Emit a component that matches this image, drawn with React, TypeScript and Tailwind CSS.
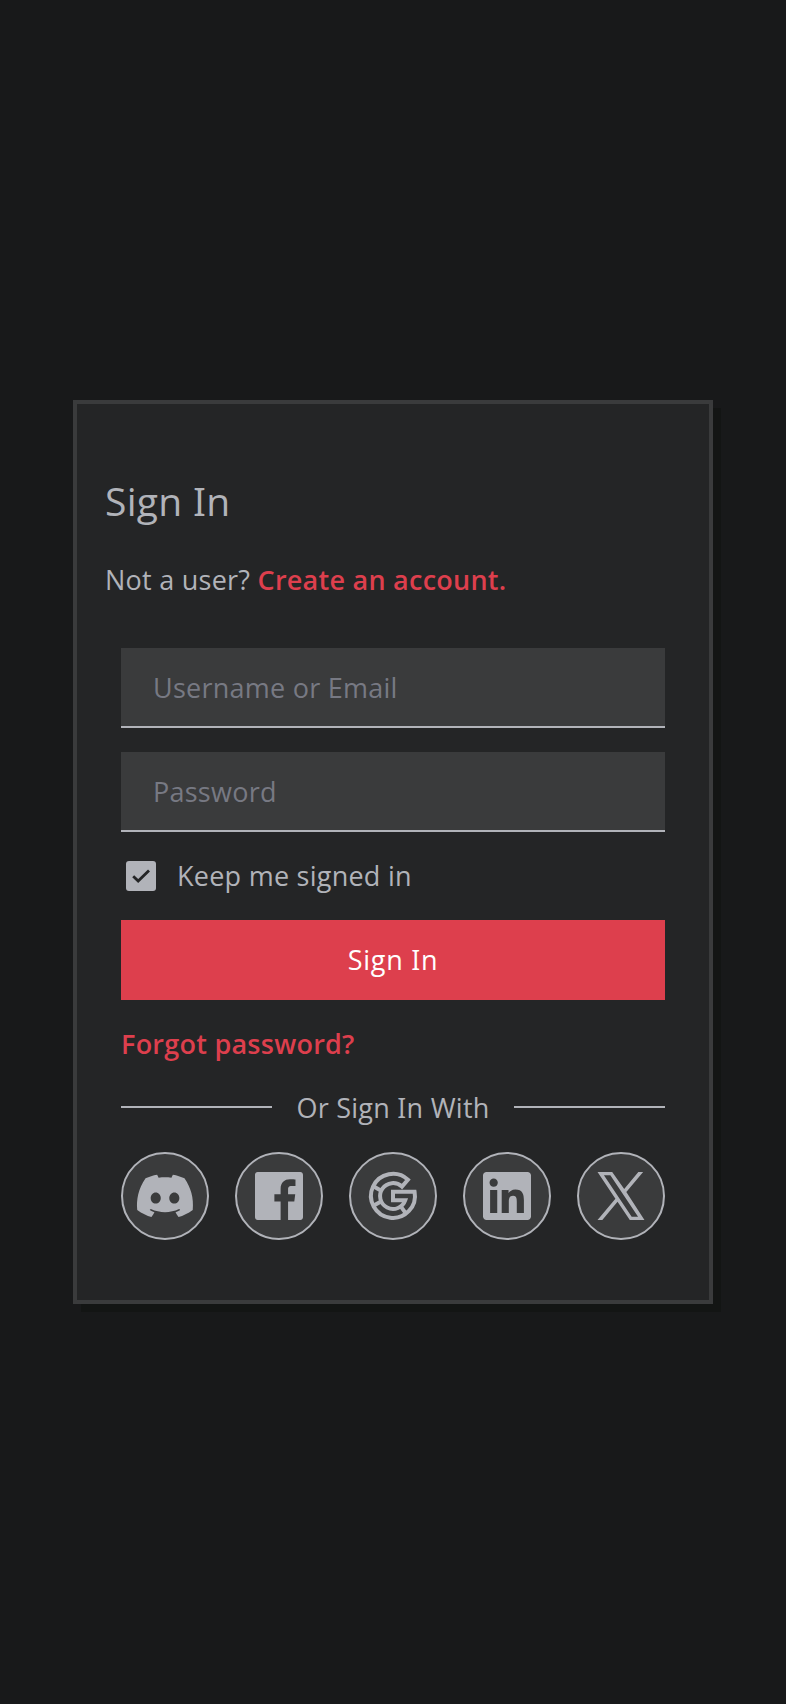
import { useState } from "react";
import { RiDiscordFill, RiFacebookBoxFill, RiLinkedinBoxFill } from "react-icons/ri";

function GoogleIcon({ className }: { className?: string }) {
  return (
    <svg viewBox="0 0 24 24" className={className} fill="none" stroke="currentColor" strokeWidth="1.5">
      <path d="M15.35 8.5 17.6 5.9A8.25 8.25 0 1 0 20.1 10.45H12V13.55H16.6A4.85 4.85 0 1 1 15.35 8.5Z" />
      <path d="M4.8 8.4 7.4 9.9M4.8 15.6 7.5 14.1M14.9 15.9 16.9 18.6" />
    </svg>
  );
}

function XIcon({ className }: { className?: string }) {
  return (
    <svg viewBox="0 0 24 24" className={className} fill="currentColor">
      <path
        fillRule="evenodd"
        d="M3.2 3H8.7L13.2 9.4 18.5 3H20.3L14 10.5 20.8 21H15.3L10.7 14.2 5 21H3.2L9.9 13ZM5.6 4.25 16 19.75H18.4L8 4.25Z"
      />
    </svg>
  );
}

const providers = [
  { name: "Discord", Icon: RiDiscordFill },
  { name: "Facebook", Icon: RiFacebookBoxFill },
  { name: "Google", Icon: GoogleIcon },
  { name: "LinkedIn", Icon: RiLinkedinBoxFill },
  { name: "X", Icon: XIcon },
];

// Capital I with serifs
function SignIn() {
  return (
    <>
      Sign <span className="[font-feature-settings:'salt','ss01']">I</span>n
    </>
  );
}

const inputClass =
  "block h-20 w-full border-b-2 border-[#b1b3b9] bg-[#3a3b3c] px-8 text-[27px] tracking-[0.25px] outline-none placeholder:text-[#777983]";

export default function App() {
  const [keep, setKeep] = useState(true);

  return (
    <div className="flex h-[1704px] items-center justify-center bg-[#18191a] font-['Open_Sans',sans-serif] text-[27px] leading-9 tracking-[0.25px] text-[#b1b3b9]">
      <div className="h-[904px] w-[640px] border-4 border-[#3a3b3c] bg-[#242526] px-7 pt-[73px] shadow-[8px_8px_0_#131514]">
        <h1 className="text-[39px] leading-[48px] tracking-[0.3px]">
          <SignIn />
        </h1>
        <p className="mt-[37px] whitespace-nowrap">
          Not a user?{" "}
          <a href="#" className="font-semibold text-[#dd3f4d]">
            Create an account.
          </a>
        </p>
        <form className="mt-[50px] px-4" onSubmit={(e) => e.preventDefault()}>
          <input type="text" placeholder="Username or Email" className={inputClass} />
          <input type="password" placeholder="Password" className={`${inputClass} mt-6`} />
          <label className="mt-[26px] flex h-9 items-center pl-[5px]">
            <input type="checkbox" className="sr-only" checked={keep} onChange={(e) => setKeep(e.target.checked)} />
            <span className="flex size-[30px] items-center justify-center rounded-[3px] bg-[#b1b3b9]">
              {keep && (
                <svg viewBox="0 0 30 30" className="size-[30px]" fill="none" stroke="#242526" strokeWidth="2.8">
                  <path d="M7.2 15.2 12.2 20 23 9.6" />
                </svg>
              )}
            </span>
            <span className="ml-[21px]">Keep me signed in</span>
          </label>
          <button type="submit" className="mt-[26px] block h-20 w-full bg-[#dd3f4d] tracking-[0.7px] text-white">
            <SignIn />
          </button>
          <a href="#" className="mt-[26px] block font-semibold text-[#dd3f4d]">
            Forgot password?
          </a>
          <div className="mt-7 flex h-9 items-center">
            <span className="mb-0.5 h-0.5 w-[151px] bg-[#b1b3b9]" />
            <span className="flex-1 text-center whitespace-nowrap">
              Or <SignIn /> With
            </span>
            <span className="mb-0.5 h-0.5 w-[151px] bg-[#b1b3b9]" />
          </div>
          <div className="mt-[26px] flex justify-between">
            {providers.map(({ name, Icon }) => (
              <button
                key={name}
                type="button"
                aria-label={name}
                className="flex size-[88px] items-center justify-center rounded-full border-2 border-[#b1b3b9] bg-[#3a3b3c]"
              >
                <Icon className="size-16" />
              </button>
            ))}
          </div>
        </form>
      </div>
    </div>
  );
}
